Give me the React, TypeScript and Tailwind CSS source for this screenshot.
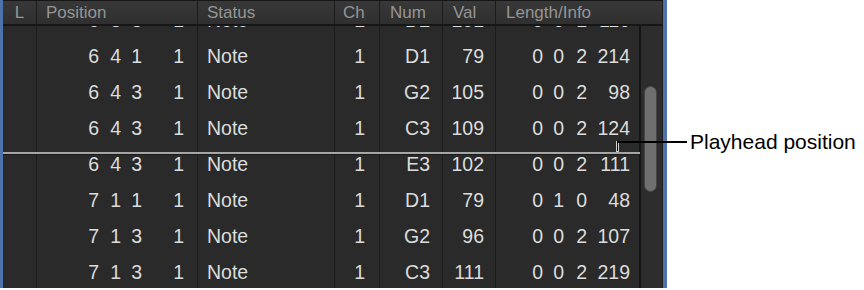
import React from "react";

type Row = { p: [string, string, string, string]; ch: string; num: string; val: string; len: [string, string, string, string] };

const rows: Row[] = [
  { p: ["6", "3", "3", "1"], ch: "1", num: "D2", val: "101", len: ["0", "0", "1", "110"] },
  { p: ["6", "4", "1", "1"], ch: "1", num: "D1", val: "79", len: ["0", "0", "2", "214"] },
  { p: ["6", "4", "3", "1"], ch: "1", num: "G2", val: "105", len: ["0", "0", "2", "98"] },
  { p: ["6", "4", "3", "1"], ch: "1", num: "C3", val: "109", len: ["0", "0", "2", "124"] },
  { p: ["6", "4", "3", "1"], ch: "1", num: "E3", val: "102", len: ["0", "0", "2", "111"] },
  { p: ["7", "1", "1", "1"], ch: "1", num: "D1", val: "79", len: ["0", "1", "0", "48"] },
  { p: ["7", "1", "3", "1"], ch: "1", num: "G2", val: "96", len: ["0", "0", "2", "107"] },
  { p: ["7", "1", "3", "1"], ch: "1", num: "C3", val: "111", len: ["0", "0", "2", "219"] },
];

const sep = "border-r border-[#1c1c1c]";

export default function App() {
  return (
    <div
      className="relative w-[864px] h-[290px] bg-white overflow-hidden"
      style={{ fontFamily: '"Liberation Sans", Arial, Helvetica, sans-serif' }}
    >
      <div className="w-[667px] h-[288px] flex flex-col border-l-[3px] border-r-[4px] border-[#4e73ab] bg-[#2a2a2a]">
        {/* Header */}
        <div className="h-[26px] shrink-0 flex border-t border-b-2 border-[#161616] bg-gradient-to-b from-[#383838] to-[#2f2f2f] text-[17px] text-[#959595] leading-none">
          <div className={`w-[34px] flex items-center justify-center ${sep}`}>L</div>
          <div className={`w-[161px] flex items-center pl-[9px] ${sep}`}>Position</div>
          <div className={`w-[137px] flex items-center pl-[9px] ${sep}`}>Status</div>
          <div className={`w-[45px] flex items-center pl-[8px] ${sep}`}>Ch</div>
          <div className={`w-[63px] flex items-center pl-[10px] ${sep}`}>Num</div>
          <div className={`w-[53px] flex items-center pl-[10px] ${sep}`}>Val</div>
          <div className={`flex-1 flex items-center pl-[10px] ${sep}`}>Length/Info</div>
        </div>
        {/* Body */}
        <div className="relative flex-1 flex overflow-hidden">
          <div className="flex-1 overflow-hidden">
            <div className="mt-[-23px] text-[19.5px] text-[#dcdcdc] leading-none">
              {rows.map((r, i) => (
                <div key={i} className="flex h-[36px]">
                  <div className={`w-[34px] ${sep}`} />
                  <div className={`w-[161px] flex items-center ${sep}`}>
                    <span className="w-[62px] text-right">{r.p[0]}</span>
                    <span className="w-[22px] text-right">{r.p[1]}</span>
                    <span className="w-[21px] text-right">{r.p[2]}</span>
                    <span className="w-[42px] text-right">{r.p[3]}</span>
                  </div>
                  <div className={`w-[137px] flex items-center pl-[9px] ${sep}`}>Note</div>
                  <div className={`w-[45px] flex items-center justify-end pr-[14px] ${sep}`}>{r.ch}</div>
                  <div className={`w-[63px] flex items-center justify-end pr-[12px] ${sep}`}>{r.num}</div>
                  <div className={`w-[53px] flex items-center justify-end pr-[11px] ${sep}`}>{r.val}</div>
                  <div className="w-[145px] flex items-center border-r-2 border-[#151515]">
                    <span className="w-[47px] text-right">{r.len[0]}</span>
                    <span className="w-[21px] text-right">{r.len[1]}</span>
                    <span className="w-[23px] text-right">{r.len[2]}</span>
                    <span className="w-[43px] text-right">{r.len[3]}</span>
                  </div>
                </div>
              ))}
            </div>
          </div>
          {/* Scrollbar */}
          <div className="w-[22px] shrink-0 bg-[#2d2d2d] border-r border-[#1e1e1e] pt-[60px] pl-[3px]">
            <div className="w-[13px] h-[106px] rounded-full bg-[#6f6f6f] border border-[#454545]" />
          </div>
          {/* Playhead line */}
          <div className="absolute left-0 top-[126px] w-[637px] h-[3px] bg-[#a6a6a6] border-b border-[#1a1a1a]" />
        </div>
      </div>
      {/* Callout */}
      <div className="absolute left-[616px] top-[141px] w-[3px] h-[11px] bg-[#d0d0d0]" />
      <div className="absolute left-[617px] top-[141px] w-[1px] h-[10px] bg-black" />
      <div className="absolute left-[617px] top-[141px] w-[70px] h-[2px] bg-black" />
      <div className="absolute left-[690px] top-[129px] text-[21px] leading-[25px] text-black whitespace-nowrap">
        Playhead position
      </div>
    </div>
  );
}
